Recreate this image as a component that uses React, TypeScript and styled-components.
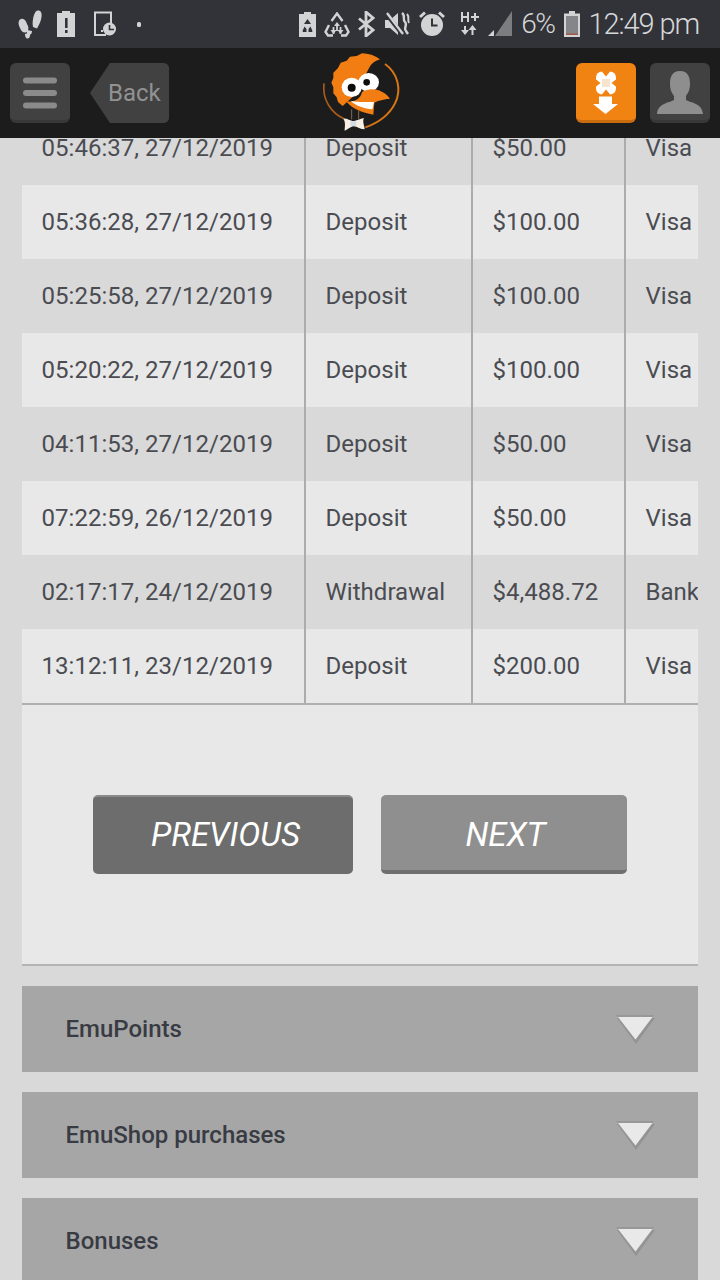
import React from "react";
import styled, { createGlobalStyle } from "styled-components";

const Global = createGlobalStyle`
  html, body { margin: 0; padding: 0; background: #d9d9d9; }
  * { box-sizing: border-box; }
`;

const Page = styled.div`
  width: 720px;
  height: 1280px;
  overflow: hidden;
  display: flex;
  flex-direction: column;
  background: #d9d9d9;
  font-family: Roboto, "Liberation Sans", sans-serif;
`;

const StatusBar = styled.div`
  height: 48px;
  flex: none;
  background: #323338;
  color: #d2d3d5;
  display: flex;
  align-items: center;
  justify-content: space-between;
  padding: 0 21px 0 18px;
`;
const StatusGroup = styled.div`
  display: flex;
  align-items: center;
`;
const StatusIcon = styled.svg<{ $ml?: number }>`
  display: block;
  flex: none;
  margin-left: ${(p) => p.$ml ?? 0}px;
`;
const Percent = styled.span`
  font-size: 28px;
  font-weight: 300;
  letter-spacing: -1.5px;
  line-height: 48px;
  margin-left: 9px;
  color: #d6d7d9;
`;
const Clock = styled.span`
  font-size: 29px;
  font-weight: 300;
  letter-spacing: -1.1px;
  line-height: 48px;
  margin-left: 9px;
  color: #d6d7d9;
  white-space: nowrap;
`;

const Header = styled.header`
  height: 90px;
  flex: none;
  background: #1c1c1c;
  display: grid;
  grid-template-columns: 1fr 120px 1fr;
  align-items: center;
  padding: 0 10px;
  position: relative;
  z-index: 2;
`;
const HeaderLeft = styled.div`
  display: flex;
  gap: 20px;
`;
const HeaderRight = styled.div`
  display: flex;
  gap: 14px;
  justify-content: flex-end;
`;
const IconButton = styled.div<{ $bg: string; $edge: string }>`
  width: 60px;
  height: 60px;
  border-radius: 6px;
  background: ${(p) => p.$bg};
  border-bottom: 3px solid ${(p) => p.$edge};
  display: flex;
  align-items: center;
  justify-content: center;
`;
const BackButton = styled.div`
  width: 79px;
  height: 60px;
  background: #414141;
  clip-path: polygon(20px 0, 74px 0, 77px 1px, 79px 4px, 79px 56px, 77px 59px, 74px 60px, 20px 60px, 0 30px);
  color: #929292;
  font-size: 24px;
  display: flex;
  align-items: center;
  padding-left: 18px;
`;
const LogoMark = styled.svg`
  display: block;
`;

const Content = styled.main`
  flex: 1;
  min-height: 0;
  overflow: hidden;
  padding: 0 22px;
`;
const Card = styled.section`
  margin-top: -27px;
  background: #e8e8e8;
  border-bottom: 2px solid #b4b4b4;
`;
const Table = styled.div`
  border-bottom: 2px solid #b0b0b0;
  overflow: hidden;
`;
const Row = styled.div<{ $shade: boolean }>`
  height: 74px;
  display: grid;
  grid-template-columns: 284px 167px 153px 1fr;
  background: ${(p) => (p.$shade ? "#d9d9d9" : "#e8e8e8")};
`;
const Cell = styled.div`
  display: flex;
  align-items: center;
  padding-left: 19.5px;
  font-size: 24px;
  letter-spacing: 0.03px;
  color: #4a4c52;
  white-space: nowrap;
  overflow: hidden;
  border-right: 2px solid #acacac;
  &:last-child { border-right: 0; }
`;
const Pager = styled.div`
  height: 259px;
  display: flex;
  justify-content: flex-start;
  gap: 28px;
  padding: 90px 0 0 71px;
`;
const PageButton = styled.div<{ $width: number; $active?: boolean }>`
  width: ${(p) => p.$width}px;
  height: 79px;
  border-radius: 5px;
  background: ${(p) => (p.$active ? "#6c6d6c" : "#8f8f8f")};
  border-top: 2px solid ${(p) => (p.$active ? "#8a8a8a" : "#8f8f8f")};
  border-bottom: 4px solid ${(p) => (p.$active ? "#6c6d6c" : "#6d706e")};
  color: #fff;
  font-size: 33px;
  font-weight: 400;
  font-style: italic;
  display: flex;
  align-items: center;
  justify-content: center;
  padding: 2px 0 0 ${(p) => (p.$active ? 5 : 3)}px;
`;
const Accordions = styled.div`
  display: flex;
  flex-direction: column;
  gap: 20px;
  margin-top: 20px;
`;
const AccordionBar = styled.div`
  height: 86px;
  flex: none;
  background: #a6a6a6;
  display: flex;
  align-items: center;
  justify-content: space-between;
  padding: 0 42px 0 43.5px;
  color: #383b43;
  font-size: 24px;
  font-weight: 500;
`;

const rows = [
  ["05:46:37, 27/12/2019", "Deposit", "$50.00", "Visa"],
  ["05:36:28, 27/12/2019", "Deposit", "$100.00", "Visa"],
  ["05:25:58, 27/12/2019", "Deposit", "$100.00", "Visa"],
  ["05:20:22, 27/12/2019", "Deposit", "$100.00", "Visa"],
  ["04:11:53, 27/12/2019", "Deposit", "$50.00", "Visa"],
  ["07:22:59, 26/12/2019", "Deposit", "$50.00", "Visa"],
  ["02:17:17, 24/12/2019", "Withdrawal", "$4,488.72", "Bank"],
  ["13:12:11, 23/12/2019", "Deposit", "$200.00", "Visa"],
];

const Arrow = () => (
  <svg width="40" height="30" viewBox="0 0 40 30" style={{ display: "block" }}>
    <path d="M1 4 L39 4 L20 30 Z" fill="#7f7f7f" opacity=".5" />
    <path d="M0 1 H38 L19.5 27 Z" fill="#989898" />
    <path d="M2 3 H36.5 L19.5 25.5 Z" fill="#e9e9e9" />
  </svg>
);

const G = "#d2d3d5";
const D = "#323338";

export default function App() {
  return (
    <Page>
      <Global />
      <StatusBar>
        <StatusGroup>
          <StatusIcon width="24" height="30" viewBox="0 0 24 30">
            <path d="M3 10 C0 11 0 15 2 19 C3 22 5 24 8 23.5 C11 22 11 18 9 15 C8 12 6 9 3 10 Z" fill={G} />
            <path d="M7 25 L11.5 23.5 C12.5 26 12 29.5 9.5 29.5 C7.5 29.5 7 27 7 25 Z" fill={G} />
            <path d="M20 1.5 C23 1.5 24 4 23.5 8 C23 12 21 16 19 19.5 L15 18 C14 14 15 9 16 6 C17 3.5 18 1.5 20 1.5 Z" fill={G} />
            <path d="M9 21 L14 22 C14 25 12 26.5 10.5 26 C9 25.5 8.5 23 9 21 Z" fill={G} />
          </StatusIcon>
          <StatusIcon $ml={15} width="18" height="26" viewBox="0 0 18 26">
            <path d="M5 0 H13 V2 H18 V26 H0 V2 H5 Z" fill={G} />
            <rect x="8" y="7" width="2.6" height="10" fill={D} />
            <rect x="8" y="19" width="2.6" height="3" fill={D} />
          </StatusIcon>
          <StatusIcon $ml={18} width="24" height="26" viewBox="0 0 24 26">
            <path d="M13 24 H2 V1.5 H18 V12" fill="none" stroke={G} strokeWidth="2" />
            <rect x="8" y="19" width="2" height="2" fill={G} />
            <circle cx="16.5" cy="18" r="6.5" fill={G} />
            <path d="M16.5 14 V18.5 H21" fill="none" stroke={D} strokeWidth="1.6" />
          </StatusIcon>
          <StatusIcon $ml={20} width="4" height="5" viewBox="0 0 4 5">
            <rect width="4" height="5" rx="1.5" fill={G} />
          </StatusIcon>
        </StatusGroup>
        <StatusGroup>
          <StatusIcon width="17" height="25" viewBox="0 0 17 25">
            <path d="M5 0 H12 V2 H17 V25 H0 V2 H5 Z" fill={G} />
            <path d="M8.5 7 L12 12 H5 Z M3.5 19 L5.5 14.5 L7.5 17 V20 H4 Z M13.5 19 L11.5 14.5 L9.5 17 V20 H13 Z" fill={D} />
          </StatusIcon>
          <StatusIcon $ml={8} width="26" height="25" viewBox="0 0 26 25">
            <path d="M7.5 9 L13 1.5 L18.5 9 M21 13 L24.5 20 L22 23.5 H17 M9 23.5 H4 L1.5 20 L5 13" fill="none" stroke={G} strokeWidth="2.4" />
            <path d="M9.5 15 V22 M13 19 V13 M16.5 15 V22" stroke={G} strokeWidth="1.8" />
            <path d="M10 14 L13 10 L16 14 Z M6.5 18 H12.5 L9.5 22 Z M13.5 18 H19.5 L16.5 22 Z" fill={G} />
          </StatusIcon>
          <StatusIcon $ml={8} width="17" height="26" viewBox="0 0 17 26">
            <path d="M1 7.5 L15 19 L8 25 V1 L15 7 L1 18.5" fill="none" stroke={G} strokeWidth="2.8" />
          </StatusIcon>
          <StatusIcon $ml={10} width="27" height="26" viewBox="0 0 27 26">
            <path d="M0 9 H5 L13 2 V24 L5 17 H0 Z" fill={G} />
            <path d="M2 4 L17 23" stroke={D} strokeWidth="4" />
            <path d="M2 2 L18 23" stroke={G} strokeWidth="2.4" />
            <path d="M17 2 C21 5 17 8 20 11 C23 14 18 17 21 20 L23 23" fill="none" stroke={G} strokeWidth="2.4" />
            <path d="M22 3 C25 6 22 9 24 12" fill="none" stroke={G} strokeWidth="2" />
          </StatusIcon>
          <StatusIcon $ml={7} width="26" height="26" viewBox="0 0 26 26">
            <circle cx="13" cy="14" r="11" fill={G} />
            <path d="M13 7.5 V14.5 H18.5" fill="none" stroke={D} strokeWidth="2" />
            <path d="M1 6 L6 1.5 M25 6 L20 1.5" stroke={G} strokeWidth="3" />
          </StatusIcon>
          <StatusIcon $ml={16} width="18" height="24" viewBox="0 0 18 24">
            <path d="M1 0 V10 M7 0 V10 M1 5 H7" stroke={G} strokeWidth="2" fill="none" />
            <path d="M10 5 H18 M14 1 V9" stroke={G} strokeWidth="2" fill="none" />
            <path d="M4 14 V19 M11.5 16 V23" stroke={G} strokeWidth="2" />
            <path d="M0 18 H8 L4 23 Z M7.5 18 L11.5 13 L15.5 18 Z" fill={G} />
          </StatusIcon>
          <StatusIcon $ml={9} width="24" height="26" viewBox="0 0 24 26">
            <path d="M24 0 V25 H7 Z" fill="#7c7d81" />
            <path d="M6 19 V25 H0 Z" fill={G} />
          </StatusIcon>
          <Percent>6%</Percent>
          <StatusIcon $ml={9} width="16" height="26" viewBox="0 0 16 26">
            <path d="M5 0 H11 V2.5 H16 V26 H0 V2.5 H5 Z" fill={G} />
            <rect x="2" y="5" width="12" height="19" fill="#85868a" />
            <rect x="2" y="22.5" width="12" height="1.5" fill="#a5564a" />
          </StatusIcon>
          <Clock>12:49 pm</Clock>
        </StatusGroup>
      </StatusBar>
      <Header>
        <HeaderLeft>
          <IconButton $bg="#414141" $edge="#383838">
            <svg width="36" height="34" viewBox="0 0 36 34">
              <rect x="1" y="2.5" width="34" height="6" rx="3" fill="#8a8a8a" />
              <rect x="1" y="15" width="34" height="6" rx="3" fill="#8a8a8a" />
              <rect x="1" y="27.5" width="34" height="6" rx="3" fill="#8a8a8a" />
            </svg>
          </IconButton>
          <BackButton>Back</BackButton>
        </HeaderLeft>
        <LogoMark width="120" height="90" viewBox="0 -6 360 270">
          <path d="M72 100 C66 150 95 190 132 206" fill="none" stroke="#a85c1c" strokeWidth="5" />
          <path d="M255 42 C295 70 305 120 285 160 C265 200 230 220 196 232" fill="none" stroke="#d97614" strokeWidth="6" />
          <path d="M155 178 V208 M176 182 V208" stroke="#8a6a48" strokeWidth="3" />
          <path d="M128 168 L114 156 L110 142 L100 130 L100 112 L94 98 L100 84 L100 68 L114 54 L122 38 L140 32 L150 20 L170 18 L186 10 C205 10 225 16 240 28 C224 33 212 42 206 56 L196 76 L170 130 Z" fill="#f27d12" />
          <ellipse cx="206" cy="97" rx="31" ry="28" fill="#fff" />
          <circle cx="200" cy="97" r="10" fill="#0d0d0d" />
          <path d="M186 126 C212 110 250 118 270 146 C252 147 234 152 223 158 L220 194 C186 188 156 176 138 154 C160 158 182 148 186 126 Z" fill="#f27d12" />
          <ellipse cx="155" cy="112" rx="30" ry="29" fill="#fff" />
          <circle cx="155" cy="113" r="12" fill="#0d0d0d" />
          <path d="M152 152 C175 158 200 155 222 156 L217 178 C194 176 168 168 152 152 Z" fill="#fff" />
          <path d="M130 206 C140 204 150 212 160 214 C170 212 180 206 192 204 C186 214 194 228 194 238 C182 238 172 230 160 228 C148 232 142 240 134 242 C134 230 138 218 130 206 Z" fill="#f7eee4" />
          <rect x="151" y="213" width="18" height="16" rx="3" fill="#d5dde4" />
        </LogoMark>
        <HeaderRight>
          <IconButton $bg="#f18313" $edge="#c96c0f">
            <svg width="40" height="50" viewBox="0 0 40 50">
              <rect x="10" y="4.5" width="20" height="23" rx="6" fill="#fff" />
              <path d="M15.5 4 H24.5 L20 9.5 Z M15.5 28 H24.5 L20 22.5 Z M9.5 12 V20 L14.5 16 Z M30.5 12 V20 L25.5 16 Z" fill="#f18313" />
              <rect x="16" y="12" width="8" height="8" fill="#f6e4cf" />
              <path d="M13 29.5 H26 V37 H32 L19.5 47 L7 37 H13 Z" fill="#fff" />
            </svg>
          </IconButton>
          <IconButton $bg="#414141" $edge="#383838">
            <svg width="46" height="44" viewBox="0 0 46 44">
              <path d="M23 1 C31 1 33 7 33 14 C33 20 31 23 29 26 L29 30 C34 33 45 33 46 44 H0 C1 33 12 33 17 30 L17 26 C15 23 13 20 13 14 C13 7 15 1 23 1 Z" fill="#8e8e8e" />
            </svg>
          </IconButton>
        </HeaderRight>
      </Header>
      <Content>
        <Card>
          <Table>
            {rows.map((r, i) => (
              <Row key={r[0]} $shade={i % 2 === 0}>
                {r.map((c, j) => (
                  <Cell key={j}>{c}</Cell>
                ))}
              </Row>
            ))}
          </Table>
          <Pager>
            <PageButton $width={260} $active>PREVIOUS</PageButton>
            <PageButton $width={246}>NEXT</PageButton>
          </Pager>
        </Card>
        <Accordions>
          {["EmuPoints", "EmuShop purchases", "Bonuses"].map((t) => (
            <AccordionBar key={t}>
              {t}
              <Arrow />
            </AccordionBar>
          ))}
        </Accordions>
      </Content>
    </Page>
  );
}
